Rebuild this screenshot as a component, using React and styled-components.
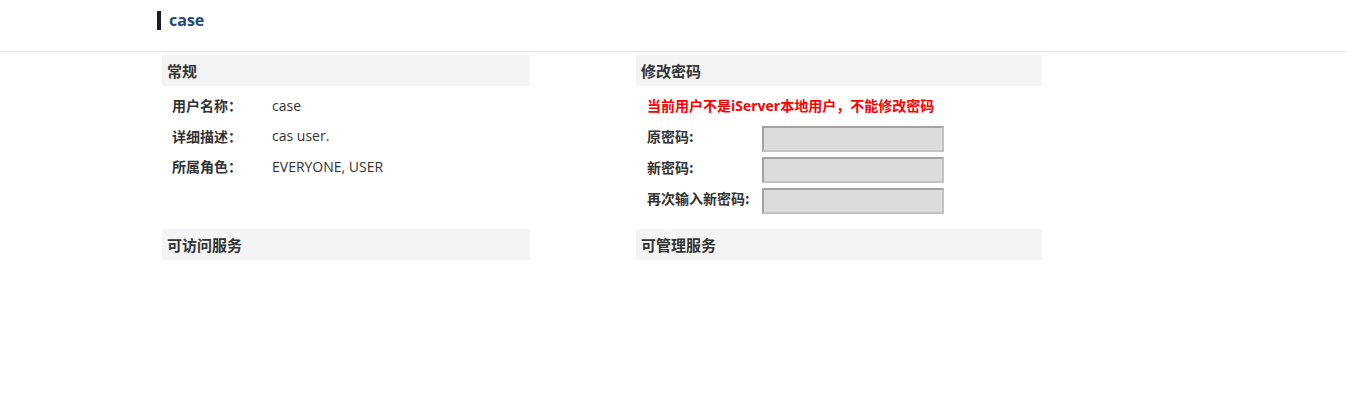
import React from "react";
import styled, { createGlobalStyle } from "styled-components";

const Global = createGlobalStyle`
  html, body { margin: 0; padding: 0; background: #fff; }
  body { font-family: "Open Sans", "Noto Sans CJK SC", sans-serif; color: #333; }
`;

const Header = styled.div`
  height: 52px;
  border-bottom: 1px solid #e3e3e3;
  box-sizing: border-box;
  padding: 11px 0 0 157px;
  display: flex;
  align-items: flex-start;
`;

const TitleMark = styled.span`
  width: 4px;
  height: 19px;
  background: #1a1d24;
  margin-right: 8px;
`;

const Title = styled.h1`
  margin: 0;
  font-size: 16px;
  line-height: 19px;
  font-weight: 700;
  color: #1d4a7e;
  font-family: "Open Sans", "Noto Sans CJK SC", sans-serif;
`;

const Grid = styled.div`
  display: grid;
  grid-template-columns: 368px 406px;
  column-gap: 106px;
  padding: 3px 0 0 162px;
`;

const SectionHead = styled.div`
  height: 31px;
  background: #f4f4f4;
  font-size: 15px;
  font-weight: 700;
  color: #333;
  display: flex;
  align-items: center;
  padding-left: 5px;
  font-family: "Noto Sans CJK SC", sans-serif;
`;

const Section = styled.div`
  display: flex;
  flex-direction: column;
`;

const InfoList = styled.div`
  display: flex;
  flex-direction: column;
  padding: 4px 0 0 10px;
`;

const InfoRow = styled.div`
  display: flex;
  align-items: center;
  height: 30.5px;
  font-size: 14px;
`;

const Label = styled.span`
  width: ${(p) => p.$w}px;
  font-weight: 700;
  font-size: 14px;
  color: #333;
  font-family: "Noto Sans CJK SC", sans-serif;
  flex-shrink: 0;
  margin-top: ${(p) => p.$lift || 0}px;
`;

const Value = styled.span`
  font-size: 14px;
  color: #333;
  font-family: "Open Sans", "Noto Sans CJK SC", sans-serif;
`;

const PwdArea = styled.div`
  display: flex;
  flex-direction: column;
  padding: 8px 0 0 11px;
`;

const Warning = styled.div`
  color: #ff0000;
  font-weight: 700;
  font-size: 14px;
  line-height: 24px;
  margin-bottom: 5px;
  font-family: "Open Sans", "Noto Sans CJK SC", sans-serif;
`;

const PwdRow = styled.div`
  display: flex;
  align-items: center;
  height: 31px;
`;

const PwdInput = styled.input`
  box-sizing: border-box;
  width: 182px;
  height: 26px;
  background: #dcdcdc;
  border: 2px solid;
  border-color: #a3a3a3 #c2c2c2 #c2c2c2 #a3a3a3;
  padding: 0;
  margin: 0;
`;

const BottomGrid = styled(Grid)`
  padding-top: 13px;
`;

export default function App() {
  return (
    <>
      <Global />
      <Header>
        <TitleMark />
        <Title>case</Title>
      </Header>
      <Grid>
        <Section>
          <SectionHead>常规</SectionHead>
          <InfoList>
            <InfoRow><Label $w={100}>用户名称：</Label><Value>case</Value></InfoRow>
            <InfoRow><Label $w={100}>详细描述：</Label><Value>cas user.</Value></InfoRow>
            <InfoRow><Label $w={100}>所属角色：</Label><Value>EVERYONE, USER</Value></InfoRow>
          </InfoList>
        </Section>
        <Section>
          <SectionHead>修改密码</SectionHead>
          <PwdArea>
            <Warning>当前用户不是iServer本地用户，不能修改密码</Warning>
            <PwdRow><Label $w={115} $lift={-5}>原密码:</Label><PwdInput type="password" disabled /></PwdRow>
            <PwdRow><Label $w={115} $lift={-5}>新密码:</Label><PwdInput type="password" disabled /></PwdRow>
            <PwdRow><Label $w={115} $lift={-5}>再次输入新密码:</Label><PwdInput type="password" disabled /></PwdRow>
          </PwdArea>
        </Section>
      </Grid>
      <BottomGrid>
        <SectionHead>可访问服务</SectionHead>
        <SectionHead>可管理服务</SectionHead>
      </BottomGrid>
    </>
  );
}
